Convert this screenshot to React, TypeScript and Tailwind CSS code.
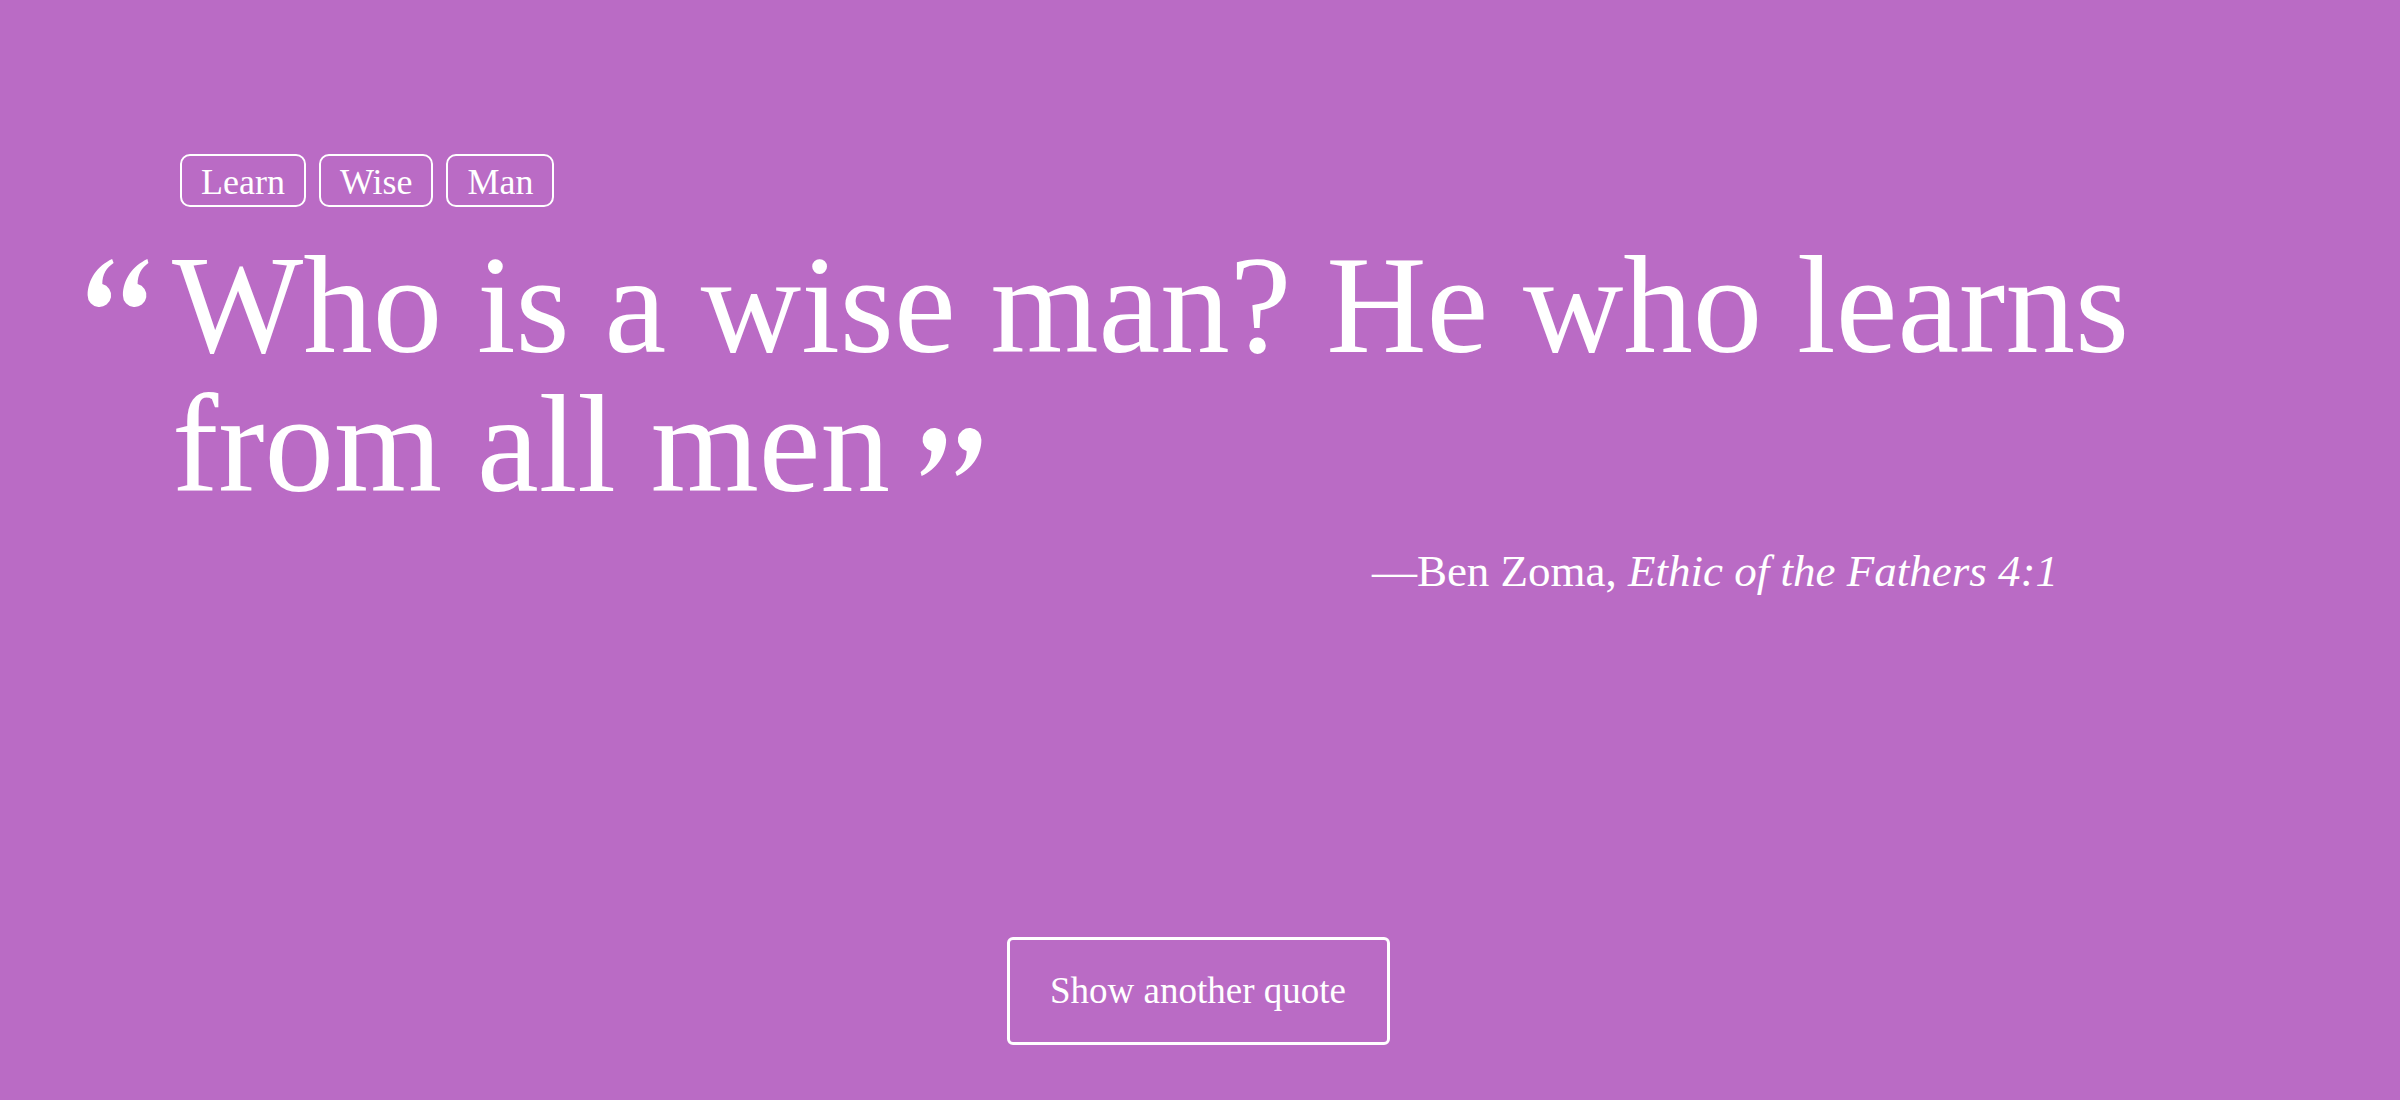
import React from "react";

const tags = ["Learn", "Wise", "Man"];

// one "6"-shaped quote stroke, repeated twice
const QuoteMarks = ({ className }: { className?: string }) => (
  <svg viewBox="0 0 62 51" className={className} fill="currentColor" aria-hidden="true">
    <path d="M0 38C0 22 10 8 25 1L26.5 5C19 10 15 17 15 26.4A12 12 0 1 1 0 38Z" />
    <path d="M36 38C36 22 46 8 61 1L62 5C55 10 51 17 51 26.4A12 12 0 1 1 36 38Z" />
  </svg>
);

const App = () => {
  return (
    <main className="min-h-[1100px] w-full bg-[#ba6bc5] text-white font-['Liberation_Serif',serif]">
      <div className="flex gap-[13px] pl-[180px] pt-[154px]">
        {tags.map((tag) => (
          <span
            key={tag}
            className="rounded-[10px] border-2 border-white px-[19px] pt-[6px] pb-[3px] text-[36px] leading-[40px]"
          >
            {tag}
          </span>
        ))}
      </div>

      <div className="mt-[29px] flex items-start pl-[87px]">
        <QuoteMarks className="mt-[22px] h-[50px] w-[62px] shrink-0" />
        <p className="ml-[23px] w-[2000px] text-[139px] leading-[139px]">
          Who is a wise man? He who learns from all men
          <QuoteMarks className="ml-[30px] inline-block h-[50px] w-[62px] rotate-180 align-[14px]" />
        </p>
      </div>

      <p className="mt-[35px] pr-[342px] text-right text-[45px] leading-[45px]">
        —Ben Zoma, <i>Ethic of the Fathers 4:1</i>
      </p>

      <div className="mt-[343px] flex justify-center pr-[4px]">
        <button className="flex h-[108px] w-[383px] items-center justify-center rounded-[6px] border-[3px] border-white text-[37px]">
          Show another quote
        </button>
      </div>
    </main>
  );
};

export default App;
